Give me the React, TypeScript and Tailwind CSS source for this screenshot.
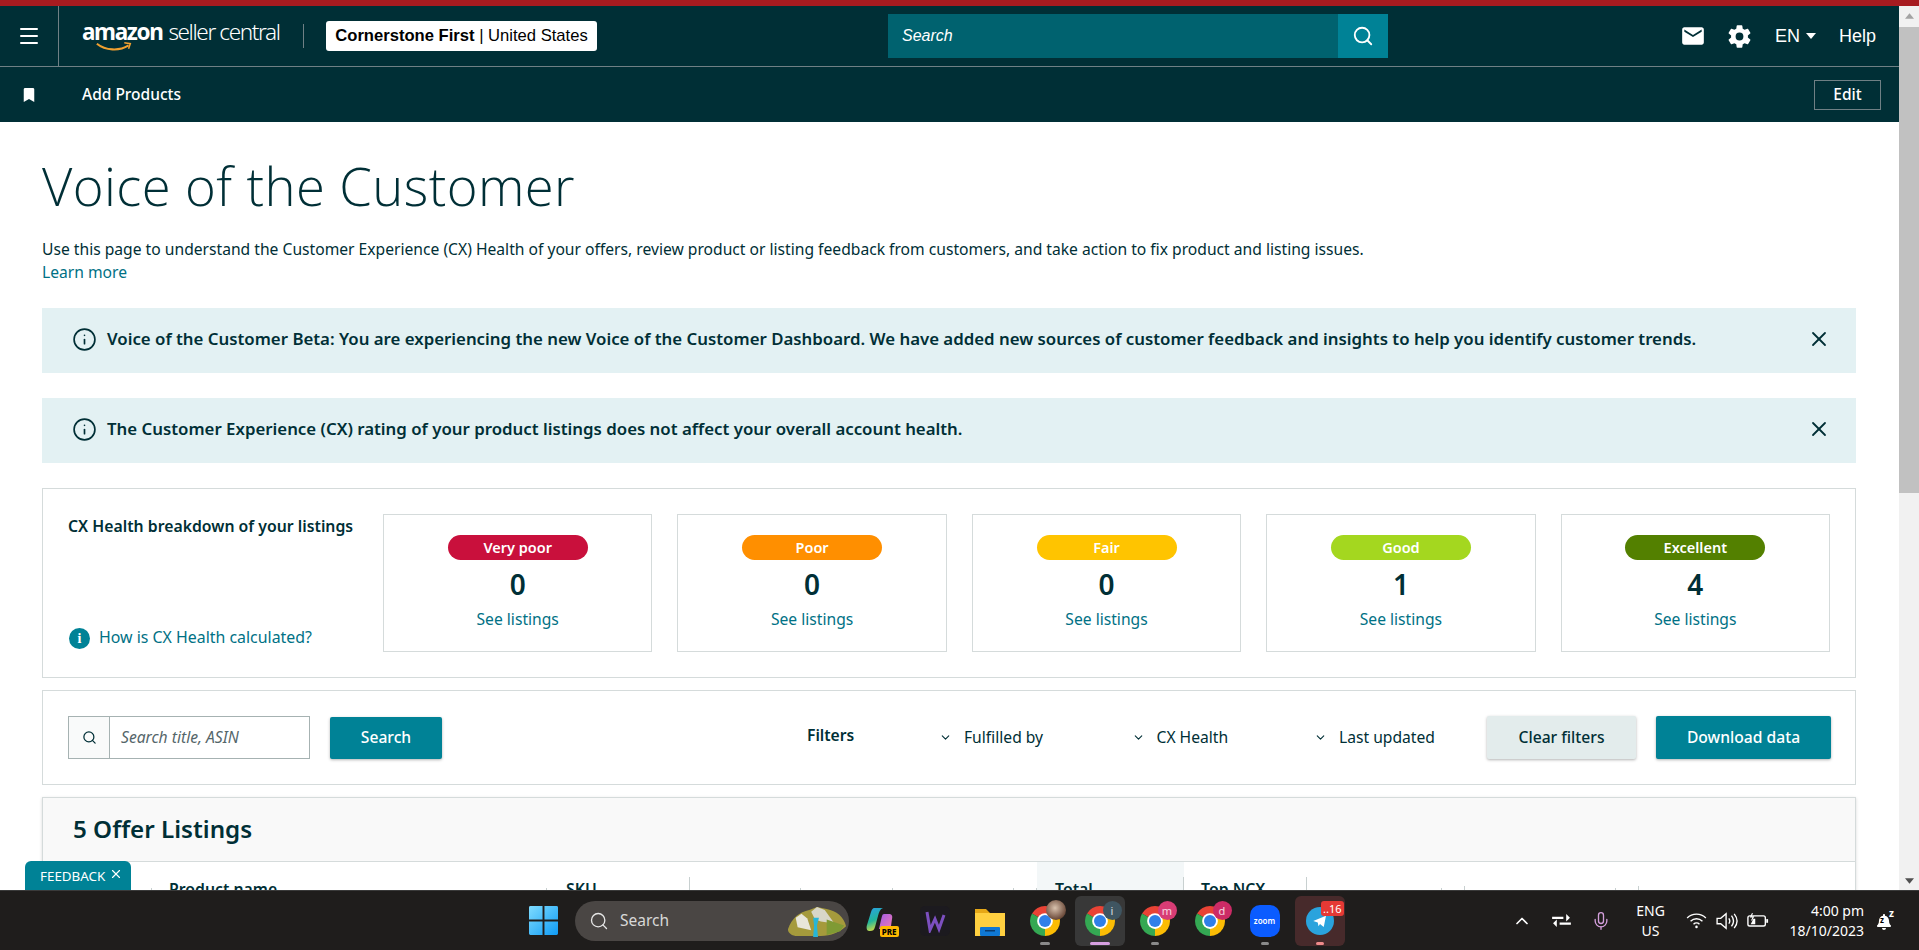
import React from "react";
import { Menu, Search, X, ChevronDown, ChevronUp, Info, Mic } from "lucide-react";
import { MdEmail } from "react-icons/md";
import { IoSettingsSharp } from "react-icons/io5";
import { FaBookmark, FaBell } from "react-icons/fa";

const healths = [
  { label: "Very poor", n: "0", cls: "bg-[#c9103c] text-white" },
  { label: "Poor", n: "0", cls: "bg-[#ff8f00] text-white" },
  { label: "Fair", n: "0", cls: "bg-[#ffc400] text-white" },
  { label: "Good", n: "1", cls: "bg-[#a4d71f] text-white" },
  { label: "Excellent", n: "4", cls: "bg-[#538000] text-white" },
];

const cols = [
  { w: "w-[109px]", t: "", sep: "mt-[26px]" },
  { w: "w-[395px]", t: "Product name", sep: "mt-[26px]", pl: "pl-[17px]" },
  { w: "w-[143px]", t: "SKU", sep: "mt-[15px]", pl: "pl-[19px]" },
  { w: "w-[111px]", t: "", sep: "mt-[26px]" },
  { w: "w-[92px]", t: "", sep: "mt-[26px]" },
  { w: "w-[121px]", t: "", sep: "mt-[26px]" },
  { w: "w-[23px]", t: "", sep: "mt-[26px]" },
  { w: "w-[147px]", t: "Total", sep: "mt-[15px]", pl: "pl-[18px]", bg: "bg-[#f3f7f8]" },
  { w: "w-[123px]", t: "Top NCX", sep: "mt-[15px]", pl: "pl-[17px]" },
  { w: "w-[135px]", t: "", sep: "mt-[26px]" },
  { w: "w-[23px]", t: "", sep: "mt-[24px]" },
  { w: "w-[151px]", t: "", sep: "mt-[26px]" },
  { w: "w-[23px]", t: "", sep: "mt-[24px]" },
];

function Chrome({ badge, cls, sub }: { badge?: string; cls?: string; sub?: boolean }) {
  return (
    <div className="relative w-[30px] h-[30px]">
      <svg viewBox="0 0 40 40" className="w-[30px] h-[30px]">
        <path d="M20 20L2.680 10A20 20 0 0 1 37.320 10Z" fill="#e94335" />
        <path d="M20 20L37.320 10A20 20 0 0 1 20 40Z" fill="#fbbc04" />
        <path d="M20 20L20 40A20 20 0 0 1 2.680 10Z" fill="#34a853" />
        <circle cx="20" cy="20" r="10.500" fill="#fff" />
        <circle cx="20" cy="20" r="8" fill="#2f7fe8" />
      </svg>
      {badge && (
        <span className={`absolute -top-[5px] -right-[7px] w-[19px] h-[19px] rounded-full flex items-center justify-center text-[11px] leading-none text-white/80 ${cls}`}>
          {badge}
        </span>
      )}
      {sub && (
        <span className="absolute -top-[6px] -right-[6px] w-[20px] h-[20px] rounded-full bg-[radial-gradient(circle_at_45%_40%,#d9c2ae,#6b4a3a_70%)]" />
      )}
    </div>
  );
}

function Slot({ children, active, dot, red }: { children: React.ReactNode; active?: boolean; dot?: string; red?: boolean }) {
  return (
    <div className={`relative w-[50px] h-[50px] rounded-md flex items-center justify-center mx-[2.5px] ${active ? "bg-[#383838]" : red ? "bg-[#472a2b]" : ""}`}>
      {children}
      {dot && <span className={`absolute bottom-[1px] left-1/2 -translate-x-1/2 h-[3px] rounded-full ${dot}`} />}
    </div>
  );
}

export default function App() {
  return (
    <div className="w-[1919px] h-[950px] overflow-hidden flex flex-col bg-white text-[#002f36] font-['Noto_Sans',sans-serif] text-[15.65px]">
      <div className="h-[6px] shrink-0 bg-[#a71b20]" />
      <div className="flex-1 min-h-0 flex relative">
        <div className="flex-1 min-w-0 overflow-hidden">
          {/* Header */}
          <div className="h-[61px] bg-[#002f36] border-b border-[#6f8085] flex items-center text-white">
            <div className="w-[59px] h-full border-r border-[#6f8085] flex items-center justify-center">
              <Menu size={24} strokeWidth={2} />
            </div>
            <div className="relative w-[198px] ml-[23px] h-full flex items-center pb-[9px] font-['Noto_Sans',sans-serif] whitespace-nowrap text-[22.5px] tracking-[-1.38px]">
              <span className="font-bold">amazon</span>
              <span className="ml-[6px] font-light">seller central</span>
              <svg viewBox="0 0 42 14" className="absolute left-[11px] top-[36px] w-[42px] h-[12px]">
                <path d="M1 2c10 8 26 9 37 2" fill="none" stroke="#f0a030" strokeWidth="2.4" />
                <path d="M33 1l7 1-2 6" fill="none" stroke="#f0a030" strokeWidth="1.8" />
              </svg>
            </div>
            <div className="w-px h-[24px] bg-[#6f8085] ml-[23px]" />
            <div className="ml-[22px] w-[271px] h-[30px] bg-white rounded-[3px] flex items-center justify-center text-black text-[16.600px] font-['Liberation_Sans',sans-serif] whitespace-nowrap">
              <b>Cornerstone First</b>&nbsp;|&nbsp;United States
            </div>
            <div className="ml-[291px] w-[500px] h-[44px] flex">
              <div className="w-[450px] bg-[#00626f] flex items-center pl-[14px] italic text-[16px] font-['Liberation_Sans',sans-serif]">Search</div>
              <div className="w-[50px] bg-[#008296] flex items-center justify-center"><Search size={22} strokeWidth={2} /></div>
            </div>
            <div className="flex-1 flex items-center justify-end pr-[23px] text-[18px]">
              <MdEmail size={26} />
              <IoSettingsSharp size={25} className="ml-[21px]" />
              <span className="ml-[23px] font-['Liberation_Sans',sans-serif]">EN</span>
              <svg viewBox="0 0 10 6" className="ml-[6px] w-[10px] h-[6px]"><path d="M0 0h10L5 6z" fill="#fff" /></svg>
              <span className="ml-[23px] font-['Liberation_Sans',sans-serif]">Help</span>
            </div>
          </div>
          {/* Sub nav */}
          <div className="h-[55px] bg-[#002f36] flex items-center text-white">
            <FaBookmark size={14} className="ml-[22px]" />
            <span className="ml-[46px] font-medium text-[15.500px] flex-1">Add Products</span>
            <div className="mr-[18px] w-[67px] h-[30px] border border-[#6f8085] flex items-center justify-center text-[15.500px] font-medium">Edit</div>
          </div>

          <div className="pl-[42px] pr-[43px]">
            <h1 className="mt-[26px] text-[52.600px] leading-[76px] font-light font-['Open_Sans',sans-serif] tracking-[0.4px]">Voice of the Customer</h1>
            <p className="mt-[14px] leading-[23px] whitespace-nowrap">Use this page to understand the Customer Experience (CX) Health of your offers, review product or listing feedback from customers, and take action to fix product and listing issues.</p>
            <p className="leading-[23px] text-[#007185]">Learn more</p>

            <div className="mt-[24px] h-[65px] bg-[#e3f1f3] flex items-center pl-[30px] pr-[25px] pb-[3px] font-semibold text-[16.820px]">
              <Info size={25} strokeWidth={1.6} />
              <span className="ml-[10px] flex-1 whitespace-nowrap">Voice of the Customer Beta: You are experiencing the new Voice of the Customer Dashboard. We have added new sources of customer feedback and insights to help you identify customer trends.</span>
              <X size={24} strokeWidth={1.8} />
            </div>
            <div className="mt-[25px] h-[65px] bg-[#e3f1f3] flex items-center pl-[30px] pr-[25px] pb-[3px] font-semibold text-[16.820px]">
              <Info size={25} strokeWidth={1.6} />
              <span className="ml-[10px] flex-1">The Customer Experience (CX) rating of your product listings does not affect your overall account health.</span>
              <X size={24} strokeWidth={1.8} />
            </div>

            {/* Health */}
            <div className="mt-[25px] h-[190px] border border-[#d5dbdb] flex p-[25px]">
              <div className="w-[315px] flex flex-col justify-between pt-[1px] pb-[2px]">
                <div className="font-semibold text-[15.8px] leading-[22px] whitespace-nowrap">CX Health breakdown of your listings</div>
                <div className="flex items-center ml-[1px] text-[#007185]">
                  <span className="w-[21px] h-[21px] rounded-full bg-[#008296] flex items-center justify-center text-white font-bold text-[14px] font-['Liberation_Serif',serif]">i</span>
                  <span className="ml-[9px] text-[15.900px]">How is CX Health calculated?</span>
                </div>
              </div>
              <div className="flex-1 flex gap-[25px]">
                {healths.map((h) => (
                  <div key={h.label} className="flex-1 h-[138px] border border-[#d5dbdb] flex flex-col items-center pt-[20px]">
                    <div className={`w-[140px] h-[25px] rounded-full flex items-center justify-center font-semibold text-[14.500px] ${h.cls}`}>{h.label}</div>
                    <div className="mt-[6px] text-[28px] leading-[36px] font-semibold">{h.n}</div>
                    <div className="mt-[7px] text-[#007185] leading-[20px]">See listings</div>
                  </div>
                ))}
              </div>
            </div>

            {/* Filters */}
            <div className="mt-[12px] h-[95px] border border-[#d5dbdb] flex items-center pl-[25px]">
              <div className="shrink-0 w-[242px] h-[43px] border border-[#a6b2b2] flex">
                <div className="w-[41px] bg-[#f9fafa] border-r border-[#a6b2b2] flex items-center justify-center">
                  <Search size={15} strokeWidth={2} />
                </div>
                <div className="flex-1 flex items-center pl-[11px] italic text-[#55666a]">Search title, ASIN</div>
              </div>
              <div className="shrink-0 ml-[20px] w-[112px] h-[42px] bg-[#008296] text-white rounded-[2px] shadow-[0_1px_3px_rgba(0,0,0,0.3)] flex items-center justify-center font-medium">Search</div>
              <span className="shrink-0 ml-[365px] w-[48px] font-semibold -mt-[4px]">Filters</span>
              <ChevronDown size={13} strokeWidth={2} className="shrink-0 ml-[84px]" />
              <span className="shrink-0 ml-[12px] w-[83px] whitespace-nowrap">Fulfilled by</span>
              <ChevronDown size={13} strokeWidth={2} className="shrink-0 ml-[84.5px]" />
              <span className="shrink-0 ml-[12px] w-[73px] whitespace-nowrap">CX Health</span>
              <ChevronDown size={13} strokeWidth={2} className="shrink-0 ml-[84.5px]" />
              <span className="shrink-0 ml-[12px] w-[96px] whitespace-nowrap">Last updated</span>
              <div className="shrink-0 ml-[52px] w-[149px] h-[43px] bg-[#e3ecec] rounded-[2px] shadow-[0_1px_3px_rgba(0,0,0,0.3)] flex items-center justify-center font-medium">Clear filters</div>
              <div className="shrink-0 ml-[20px] w-[175px] h-[43px] bg-[#008296] text-white rounded-[2px] shadow-[0_1px_3px_rgba(0,0,0,0.3)] flex items-center justify-center font-medium">Download data</div>
            </div>

            {/* Listings */}
            <div className="mt-[12px] border border-[#d5dbdb] shadow-[0_1px_3px_rgba(0,0,0,0.15)]">
              <div className="h-[64px] bg-[#f9f9f9] border-b border-[#d5dbdb] flex items-center pl-[30px] text-[24.200px] font-semibold">5 Offer Listings</div>
              <div className="h-[60px] flex">
                {cols.map((c, i) => (
                  <div key={i} className={`${c.w} shrink-0 relative flex ${c.bg ?? ""}`}>
                    <div className={`flex-1 font-semibold text-[15.8px] leading-[20px] pt-[17px] whitespace-nowrap ${c.pl ?? ""}`}>{c.t}</div>
                    <div className={`w-px bg-[#c8d0d0] ${c.sep} h-[40px]`} />
                  </div>
                ))}
              </div>
            </div>
          </div>
        </div>

        {/* Scrollbar */}
        <div className="w-[20px] shrink-0 bg-[#f1f1f1] flex flex-col items-center pt-[7px]">
          <svg viewBox="0 0 10 6" className="w-[9px] h-[6px]"><path d="M5 0l5 6H0z" fill="#a3a3a3" /></svg>
          <div className="mt-[8px] w-full h-[466px] bg-[#c1c1c1]" />
          <div className="flex-1" />
          <svg viewBox="0 0 10 6" className="w-[9px] h-[6px] mb-[6px]"><path d="M0 0h10L5 6z" fill="#505050" /></svg>
        </div>

        {/* Feedback tab */}
        <div className="absolute left-[25px] bottom-0 w-[106px] h-[29px] bg-[#008296] rounded-t-[6px] text-white flex items-start pt-[5px] pl-[15px] text-[13.400px]">
          <span>FEEDBACK</span>
          <X size={14} className="ml-[4px] mt-[1px]" />
        </div>
      </div>

      {/* Taskbar */}
      <div className="h-[60px] shrink-0 bg-[#1f1d1c] border-t border-[#3a3a3a] flex items-center text-white font-['Noto_Sans',sans-serif] relative">
        <svg viewBox="0 0 30 30" className="ml-[529px] w-[29px] h-[29px]">
          <defs>
            <linearGradient id="w" x1="0" y1="0" x2="1" y2="1"><stop offset="0" stopColor="#7fdcff" /><stop offset="1" stopColor="#0f9bf5" /></linearGradient>
          </defs>
          <path d="M0 1.5A1.5 1.5 0 0 1 1.5 0H14v14H0zM16 0h12.5A1.5 1.5 0 0 1 30 1.5V14H16zM0 16h14v14H1.5A1.5 1.5 0 0 1 0 28.500zM16 16h14v12.500a1.5 1.5 0 0 1-1.500 1.500H16z" fill="url(#w)" />
        </svg>
        <div className="ml-[17px] w-[274px] h-[40px] rounded-full bg-[#4a4644] flex items-center pl-[14px] relative">
          <Search size={20} strokeWidth={1.6} className="text-[#e6e6e6]" />
          <span className="ml-[11px] text-[15.500px] text-[#d8d8d8]">Search</span>
          <svg viewBox="0 0 64 36" className="absolute right-[1px] top-[3px] w-[62px] h-[35px]">
            <path d="M2 26C6 14 14 8 24 6l8-3 10 2c10 2 18 8 20 18-6 6-16 10-26 10H12C6 33 2 30 2 26z" fill="#a59a3c" />
            <path d="M26 8l6-5 8 3 10 14-14-2-6-2z" fill="#d8d6c8" />
            <path d="M10 14l6-4 6 5 4 12-14-3z" fill="#e8e6da" />
            <path d="M28 14h6l-2 8 1 12h-5l1-12z" fill="#27b6d8" />
            <path d="M42 16l18 6-4 6-14 4z" fill="#7f9a34" />
          </svg>
        </div>
        <div className="ml-[3px] flex items-center">
          <Slot>
            <div className="relative w-[30px] h-[30px]">
              <svg viewBox="0 0 30 30" className="w-[30px] h-[30px]">
                <defs>
                  <linearGradient id="c1" x1="0" y1="0" x2="0.3" y2="1"><stop offset="0" stopColor="#2a9fe8" /><stop offset="0.6" stopColor="#22b59a" /><stop offset="1" stopColor="#c6d94a" /></linearGradient>
                  <linearGradient id="c2" x1="0" y1="0" x2="1" y2="1"><stop offset="0" stopColor="#a05be8" /><stop offset="1" stopColor="#f07ab0" /></linearGradient>
                </defs>
                <path d="M9 2h9c-3 1-4 4-5 8l-3 11c-1 3-2 4-5 4H4C2 25 1 22 2 19L6 6c1-3 2-4 3-4z" fill="url(#c1)" />
                <path d="M19 8h5c2 0 4 1 3 5l-1 7c0 2-2 3-4 3h-8l2-9c1-3 1-6 3-6z" fill="url(#c2)" />
              </svg>
              <span className="absolute -right-[4px] bottom-[-1px] px-[2px] bg-[#ffb900] rounded-[2px] text-black text-[8px] leading-[11px] font-extrabold">PRE</span>
            </div>
          </Slot>
          <Slot>
            <div className="w-[30px] h-[30px] rounded-[5px] bg-[#1c1a1f] flex items-center justify-center">
              <svg viewBox="0 0 24 24" className="w-[24px] h-[24px]"><path d="M4 3l3 18 5-11 4 10 5-14" fill="none" stroke="#7c4fc0" strokeWidth="3" /></svg>
            </div>
          </Slot>
          <Slot>
            <svg viewBox="0 0 30 30" className="w-[30px] h-[30px]">
              <path d="M0 3h11l4 4v8H0z" fill="#e6a817" />
              <path d="M0 7h30v23H0z" fill="#ffd040" />
              <rect x="5" y="21" width="20" height="9" rx="1" fill="#0f78d4" />
              <rect x="10" y="24" width="10" height="1.500" fill="#083b70" />
            </svg>
          </Slot>
          <Slot dot="w-[10px] bg-[#8a8a8a]"><Chrome sub /></Slot>
          <Slot active dot="w-[20px] bg-[#d69fe0]"><Chrome badge="i" cls="bg-[#3f5561]" /></Slot>
          <Slot dot="w-[8px] bg-[#8a8a8a]"><Chrome badge="m" cls="bg-[#d83c75]" /></Slot>
          <Slot><Chrome badge="d" cls="bg-[#cc2b66]" /></Slot>
          <Slot dot="w-[8px] bg-[#8a8a8a]">
            <div className="w-[30px] h-[32px] rounded-[10px] bg-[#0b5cff] flex items-center justify-center text-[8px] font-semibold text-white">zoom</div>
          </Slot>
          <Slot red dot="w-[8px] bg-[#f08a8a]">
            <div className="relative w-[28px] h-[28px] rounded-full bg-[#2aa3dd] flex items-center justify-center">
              <svg viewBox="0 0 24 24" className="w-[18px] h-[18px]"><path d="M3 12L20 5l-3 15-5-4-2 3-1-5z" fill="#fff" /></svg>
              <span className="absolute -top-[6px] -right-[10px] px-[2px] h-[15px] bg-[#e53935] rounded-[3px] text-[11px] leading-[15px] text-white">..16</span>
            </div>
          </Slot>
        </div>

        <div className="flex-1" />
        <ChevronUp size={20} strokeWidth={2} className="mr-[20px]" />
        <svg viewBox="0 0 20 16" className="w-[19px] h-[15px] mr-[20px]">
          <path d="M0 4h12v2.500H0zM15 1l4 4-4 4zM8 10h12v2.500H8zM5 7l-4 4 4 4z" fill="#fff" />
        </svg>
        <Mic size={20} strokeWidth={1.6} className="text-[#d49fdc] mr-[20px]" />
        <div className="w-[40px] text-center text-[14px] leading-[20px] mr-[15px]">ENG<br />US</div>
        <svg viewBox="0 0 24 20" className="w-[21px] h-[17px] mr-[9px]" fill="none" stroke="#fff" strokeWidth="1.6">
          <path d="M1 7c6-6 16-6 22 0M5 11c4-4 10-4 14 0M8.500 14.500c2-2 5-2 7 0" />
          <circle cx="12" cy="17.500" r="1.500" fill="#fff" stroke="none" />
        </svg>
        <svg viewBox="0 0 24 20" className="w-[22px] h-[18px] mr-[9px]" fill="none" stroke="#fff" strokeWidth="1.5">
          <path d="M1 7h4l6-5v16l-6-5H1zM14 7c1.500 2 1.500 4 0 6M17 4c3 4 3 8 0 12M20 2c4 5 4 11 0 16" />
        </svg>
        <svg viewBox="0 0 24 16" className="w-[22px] h-[15px] mr-[21px]" fill="none" stroke="#fff" strokeWidth="1.5">
          <rect x="1" y="3" width="19" height="11" rx="2" />
          <rect x="21" y="6.500" width="2" height="4" fill="#fff" stroke="none" />
          <path d="M4 12l3-6h2v6z" fill="#fff" stroke="none" />
          <path d="M6 0l-2 4h3L5 8" strokeWidth="1.2" />
        </svg>
        <div className="text-right text-[14px] leading-[20px] whitespace-nowrap">4:00 pm<br />18/10/2023</div>
        <div className="relative ml-[12px] mr-[25px] w-[18px] h-[20px]">
          <FaBell size={16} className="absolute left-0 top-[3px]" />
          <span className="absolute left-[4px] top-[5px] text-[8px] leading-none text-black font-bold">z</span>
          <span className="absolute right-0 -top-[3px] text-[10px] leading-none font-bold">z</span>
        </div>
      </div>
    </div>
  );
}
